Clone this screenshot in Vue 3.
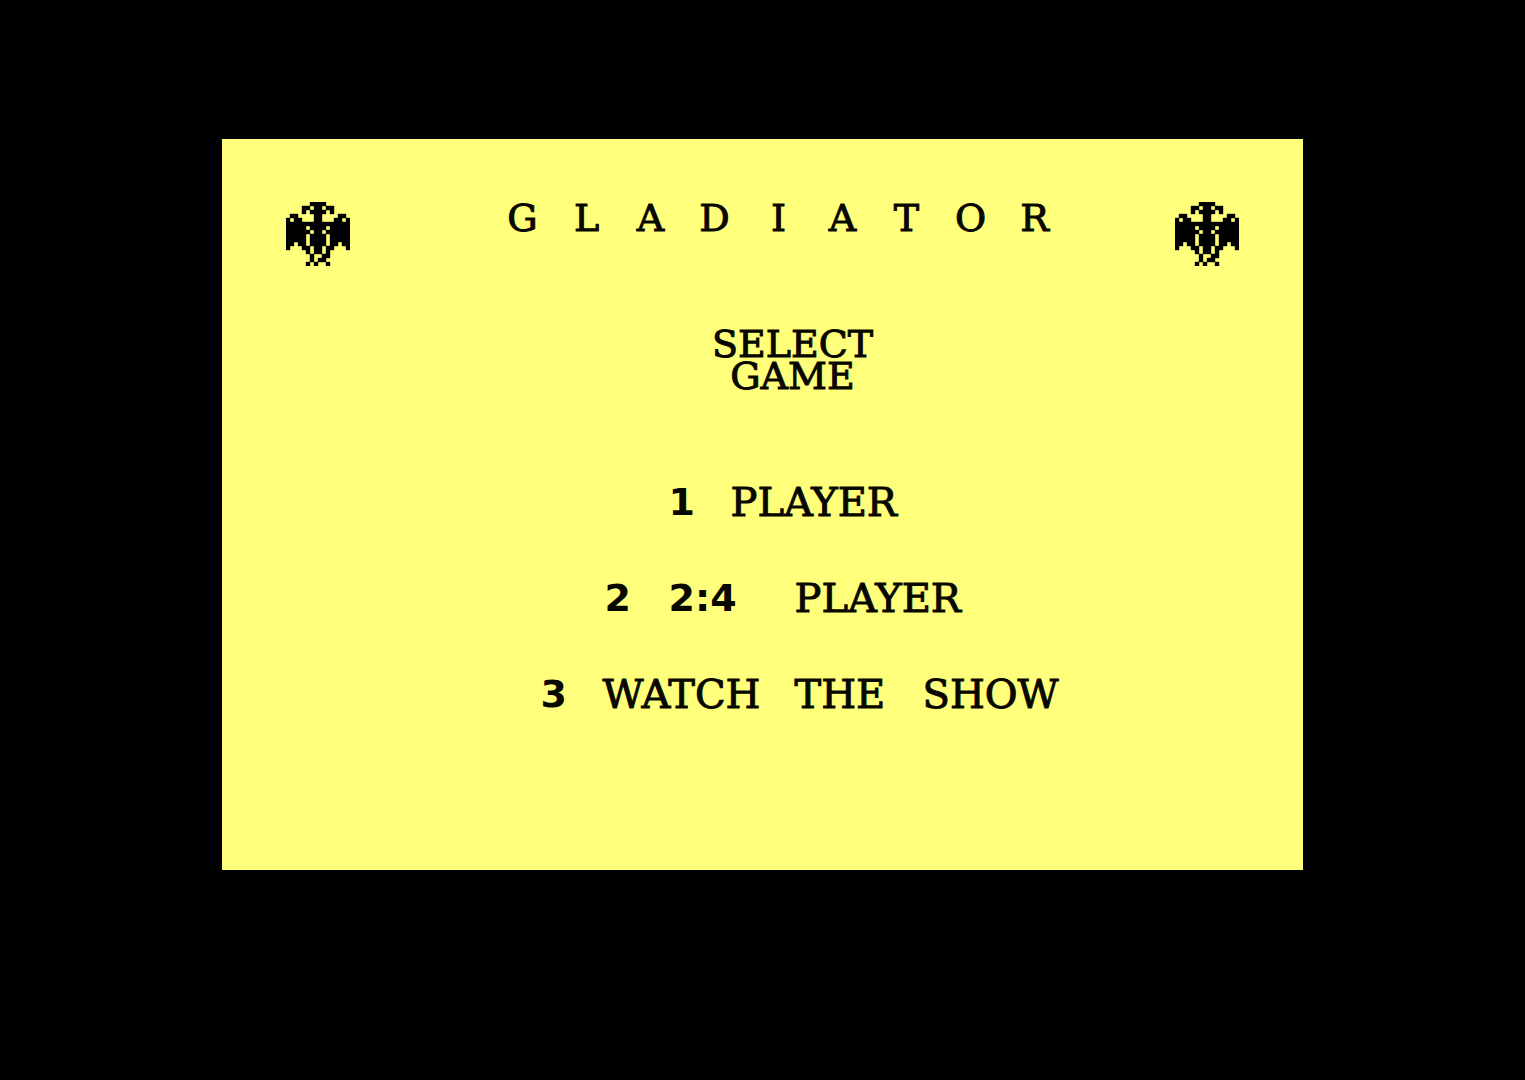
<template>
  <main class="screen">
    <section class="panel">
      <header class="banner">
        <svg class="eagle" viewBox="0 0 16 16" aria-hidden="true">
          <path :d="eaglePath" />
        </svg>
        <h1 class="title">
          <span v-for="(letter, i) in title" :key="i">{{ letter }}</span>
        </h1>
        <svg class="eagle" viewBox="0 0 16 16" aria-hidden="true">
          <path :d="eaglePath" />
        </svg>
      </header>

      <h2 class="prompt">SELECT<br />GAME</h2>

      <nav class="menu">
        <button v-for="game in games" :key="game" class="game" type="button">
          <span
            v-for="word in game.split(' ')"
            :key="word"
            :class="['word', { digit: isDigit(word) }]"
            :style="{ width: word.length * CELL + 'px' }"
          >{{ word }}</span>
        </button>
      </nav>
    </section>
  </main>
</template>

<script setup>
// width of one character cell
const CELL = 32

const title = 'GLADIATOR'
const games = ['1 PLAYER', '2 2:4 PLAYER', '3 WATCH THE SHOW']

function isDigit(word) {
  return /^\d/.test(word)
}

// 16x16 sprite, one string per pixel row
const eagle = [
  '......####......',
  '....##.##.##....',
  '....#.####.#....',
  '.##....##....##.',
  '#.##...##...##.#',
  '################',
  '#####.####.#####',
  '######.##.######',
  '#####.####.#####',
  '#####.####.#####',
  '##.##.####.##.##',
  '#...##.##.##...#',
  '.....#.##.#.....',
  '......#..##.....',
  '......#.##......',
  '.....#.#..#.....'
]

const eaglePath = eagle
  .flatMap((row, y) => [...row].map((c, x) => (c === '#' ? `M${x} ${y}h1v1h-1z` : '')))
  .join('')
</script>

<style>
body {
  margin: 0;
  background: #000;
}
</style>

<style scoped>
.screen {
  box-sizing: border-box;
  min-height: 100vh;
  padding: 139px 222px;
  background: #000;
  color: #080800;
  font-family: "DejaVu Serif", serif;
  font-size: 40px;
  line-height: 32px;
  -webkit-text-stroke: 1px #080800;
}
.panel {
  padding: 63px 64px 160px;
  background: #ffff7c;
}
.banner {
  display: flex;
  justify-content: space-between;
  align-items: flex-start;
}
.eagle {
  width: 64px;
  height: 64px;
  fill: #000;
  stroke: #000;
  stroke-width: 0.1;
}
.title {
  display: grid;
  grid-template-columns: repeat(9, 64px);
  margin: 0;
  padding-left: 32px;
  font-size: 38px;
  font-weight: normal;
  text-align: center;
}
.prompt {
  margin: 62px 0 0;
  padding-left: 60px;
  font-size: 38px;
  font-weight: normal;
  text-align: center;
}
.menu {
  display: flex;
  flex-direction: column;
  align-items: center;
  gap: 64px;
  margin-top: 94px;
  padding-left: 64px;
}
.game {
  display: flex;
  gap: 32px;
  padding: 0;
  border: none;
  background: none;
  color: inherit;
  font: inherit;
  text-align: left;
  cursor: pointer;
}
.digit {
  font-family: "DejaVu Sans", sans-serif;
  font-size: 38px;
  font-weight: bold;
  text-indent: 2px;
  -webkit-text-stroke: 0;
}
</style>
